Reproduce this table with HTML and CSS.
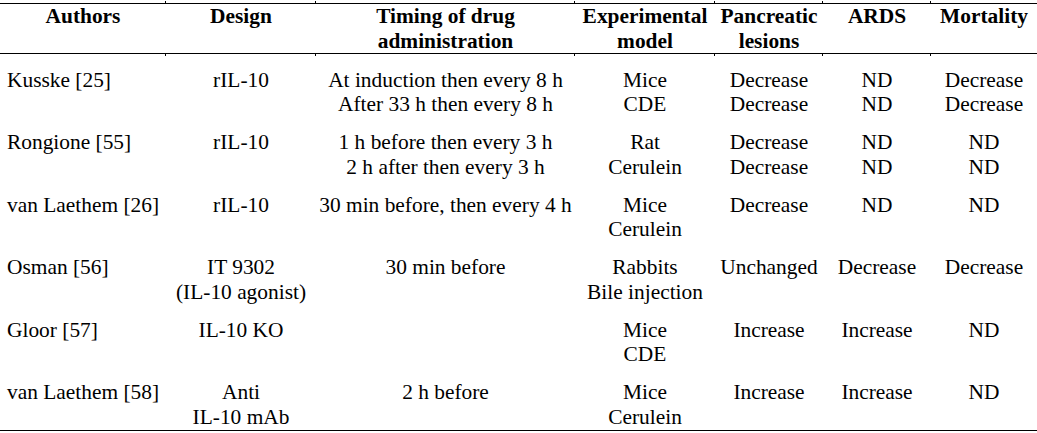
FILE: index.html
```html
<!DOCTYPE html>
<html lang="en">
<head>
<meta charset="utf-8">
<title>IL-10 studies</title>
<link rel="stylesheet" href="styles.css">
</head>
<body>
<table class="data">
  <colgroup>
    <col class="c-authors">
    <col class="c-design">
    <col class="c-timing">
    <col class="c-model">
    <col class="c-lesions">
    <col class="c-ards">
    <col class="c-mort">
  </colgroup>
  <thead>
    <tr>
      <th>Authors</th>
      <th class="tick">Design</th>
      <th class="tick">Timing of drug<br>administration</th>
      <th class="tick">Experimental<br>model</th>
      <th class="tick">Pancreatic<br>lesions</th>
      <th class="tick">ARDS</th>
      <th class="tick">Mortality</th>
    </tr>
  </thead>
  <tbody>
    <tr>
      <td class="left">Kusske [25]</td>
      <td>rIL-10</td>
      <td>At induction then every 8 h<br>After 33 h then every 8 h</td>
      <td>Mice<br>CDE</td>
      <td>Decrease<br>Decrease</td>
      <td>ND<br>ND</td>
      <td>Decrease<br>Decrease</td>
    </tr>
    <tr>
      <td class="left">Rongione [55]</td>
      <td>rIL-10</td>
      <td>1 h before then every 3 h<br>2 h after then every 3 h</td>
      <td>Rat<br>Cerulein</td>
      <td>Decrease<br>Decrease</td>
      <td>ND<br>ND</td>
      <td>ND<br>ND</td>
    </tr>
    <tr>
      <td class="left">van Laethem [26]</td>
      <td>rIL-10</td>
      <td>30 min before, then every 4 h</td>
      <td>Mice<br>Cerulein</td>
      <td>Decrease</td>
      <td>ND</td>
      <td>ND</td>
    </tr>
    <tr>
      <td class="left">Osman [56]</td>
      <td>IT 9302<br>(IL-10 agonist)</td>
      <td>30 min before</td>
      <td>Rabbits<br>Bile injection</td>
      <td>Unchanged</td>
      <td>Decrease</td>
      <td>Decrease</td>
    </tr>
    <tr>
      <td class="left">Gloor [57]</td>
      <td>IL-10 KO</td>
      <td></td>
      <td>Mice<br>CDE</td>
      <td>Increase</td>
      <td>Increase</td>
      <td>ND</td>
    </tr>
    <tr class="last">
      <td class="left">van Laethem [58]</td>
      <td class="tick">Anti<br>IL-10 mAb</td>
      <td class="tick">2 h before</td>
      <td class="tick">Mice<br>Cerulein</td>
      <td class="tick">Increase</td>
      <td class="tick">Increase</td>
      <td class="tick">ND</td>
    </tr>
  </tbody>
</table>
</body>
</html>
```

FILE: styles.css
```css
html, body {
  margin: 0;
  padding: 0;
  background: #fff;
}

body {
  font-family: "Liberation Serif", "Times New Roman", serif;
  font-size: 21.4px;
  line-height: 24.6px;
  color: #000;
}

.data {
  margin-top: 3px;
  width: 1037px;
  border-collapse: collapse;
  table-layout: fixed;
}

.c-authors { width: 166px; }
.c-design { width: 150px; }
.c-timing { width: 259px; }
.c-model { width: 140px; }
.c-lesions { width: 108px; }
.c-ards { width: 108px; }
.c-mort { width: 106px; }

.data th {
  font-weight: bold;
  text-align: center;
  vertical-align: top;
  padding: 0;
  border-top: 1px solid #000;
  border-bottom: 1px solid #000;
  height: 49px;
  white-space: nowrap;
}

.data td {
  text-align: center;
  vertical-align: top;
  padding: 13.4px 0 0 0;
  white-space: nowrap;
}

.data td.left {
  text-align: left;
  padding-left: 7px;
}

.data tr.last td {
  border-bottom: 1px solid #000;
}

.tick {
  position: relative;
}

th.tick::before {
  content: "";
  position: absolute;
  left: -1px;
  top: -3px;
  width: 1px;
  height: 3px;
  background: #000;
}

th.tick::after,
td.tick::after {
  content: "";
  position: absolute;
  left: -1px;
  bottom: -3px;
  width: 1px;
  height: 3px;
  background: #000;
}
```
